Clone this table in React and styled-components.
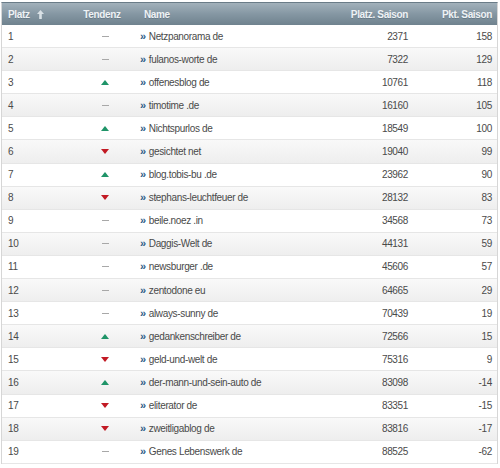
import React from "react";
import styled, { createGlobalStyle } from "styled-components";

const GlobalStyle = createGlobalStyle`
  body {
    margin: 0;
    background: #ffffff;
    font-family: "Liberation Sans", Arial, sans-serif;
  }
`;

const cols = "64px 72px 1fr 100px 84px";

const Wrapper = styled.div`
  padding: 2px 2px 0 1px;
`;

const Table = styled.div`
  border-left: 1px solid #d6d6d6;
  border-right: 1px solid #d6d6d6;
  border-top: 1px solid #6a7c88;
`;

const HeaderRow = styled.div`
  display: grid;
  grid-template-columns: ${cols};
  height: 22px;
  align-items: center;
  background: linear-gradient(to bottom, #a2b1bb 0%, #8597a3 50%, #6f828e 100%);
  color: #eef2f5;
  font-size: 10px;
  letter-spacing: -0.35px;
  font-weight: bold;
  text-shadow: 0 1px 0 rgba(60, 80, 95, 0.35);
`;

const HeadCell = styled.div`
  padding: 0 ${(p) => (p.$align === "right" ? "5px" : "6px")};
  display: flex;
  align-items: center;
  justify-content: ${(p) =>
    p.$align === "right" ? "flex-end" : p.$align === "center" ? "center" : "flex-start"};
  gap: 7px;
`;

const Row = styled.div`
  display: grid;
  grid-template-columns: ${cols};
  height: 23.1px;
  box-sizing: border-box;
  align-items: center;
  border-bottom: 1px solid #e6e6e6;
  background: ${(p) =>
    p.$odd ? "#ffffff" : "linear-gradient(to bottom, #f9f9f9 0%, #eeeeee 100%)"};
  color: #4a4a4a;
  font-size: 10px;
  letter-spacing: -0.35px;
`;

const Cell = styled.div`
  padding: 0 ${(p) => (p.$align === "right" ? "5px" : "6px")};
  white-space: nowrap;
  display: flex;
  align-items: center;
  justify-content: ${(p) =>
    p.$align === "right" ? "flex-end" : p.$align === "center" ? "center" : "flex-start"};
`;

const NameCell = styled(Cell)`
  padding-left: 2px;
`;

const Chevron = styled.span`
  color: #2d5b86;
  font-weight: bold;
  font-size: 11px;
  margin-right: 3px;
  line-height: 1;
`;

const Dash = styled.span`
  display: inline-block;
  width: 7px;
  height: 1px;
  background: #a8a8a8;
  margin-left: 6px;
`;

const Arrow = ({ dir }) => (
  <svg width="8" height="5" viewBox="0 0 8 5" style={{ marginLeft: 6 }}>
    {dir === "up" ? (
      <polygon points="0,5 8,5 4,0" fill="#1f9468" />
    ) : (
      <polygon points="0,0 8,0 4,5" fill="#c21a24" />
    )}
  </svg>
);

const SortIcon = () => (
  <svg width="7" height="9" viewBox="0 0 7 9">
    <polygon points="3.5,0 7,4 4.8,4 4.8,9 2.2,9 2.2,4 0,4" fill="#d9e1e6" />
  </svg>
);

const rows = [
  [1, "", "Netzpanorama de", 2371, 158],
  [2, "", "fulanos-worte de", 7322, 129],
  [3, "up", "offenesblog de", 10761, 118],
  [4, "", "timotime .de", 16160, 105],
  [5, "up", "Nichtspurlos de", 18549, 100],
  [6, "down", "gesichtet net", 19040, 99],
  [7, "up", "blog.tobis-bu .de", 23962, 90],
  [8, "down", "stephans-leuchtfeuer de", 28132, 83],
  [9, "", "beile.noez .in", 34568, 73],
  [10, "", "Daggis-Welt de", 44131, 59],
  [11, "", "newsburger .de", 45606, 57],
  [12, "", "zentodone eu", 64665, 29],
  [13, "", "always-sunny de", 70439, 19],
  [14, "up", "gedankenschreiber de", 72566, 15],
  [15, "down", "geld-und-welt de", 75316, 9],
  [16, "up", "der-mann-und-sein-auto de", 83098, -14],
  [17, "down", "eliterator de", 83351, -15],
  [18, "down", "zweitligablog de", 83816, -17],
  [19, "", "Genes Lebenswerk de", 88525, -62],
];

export default function App() {
  return (
    <Wrapper>
      <GlobalStyle />
      <Table>
        <HeaderRow>
          <HeadCell>
            Platz <SortIcon />
          </HeadCell>
          <HeadCell $align="center">Tendenz</HeadCell>
          <HeadCell>Name</HeadCell>
          <HeadCell $align="right">Platz. Saison</HeadCell>
          <HeadCell $align="right">Pkt. Saison</HeadCell>
        </HeaderRow>
        {rows.map(([platz, trend, name, saison, pkt]) => (
          <Row key={platz} $odd={platz % 2 === 1}>
            <Cell>{platz}</Cell>
            <Cell $align="center">
              {trend ? <Arrow dir={trend} /> : <Dash />}
            </Cell>
            <NameCell>
              <Chevron>»</Chevron>
              {name}
            </NameCell>
            <Cell $align="right">{saison}</Cell>
            <Cell $align="right">{pkt}</Cell>
          </Row>
        ))}
      </Table>
    </Wrapper>
  );
}
